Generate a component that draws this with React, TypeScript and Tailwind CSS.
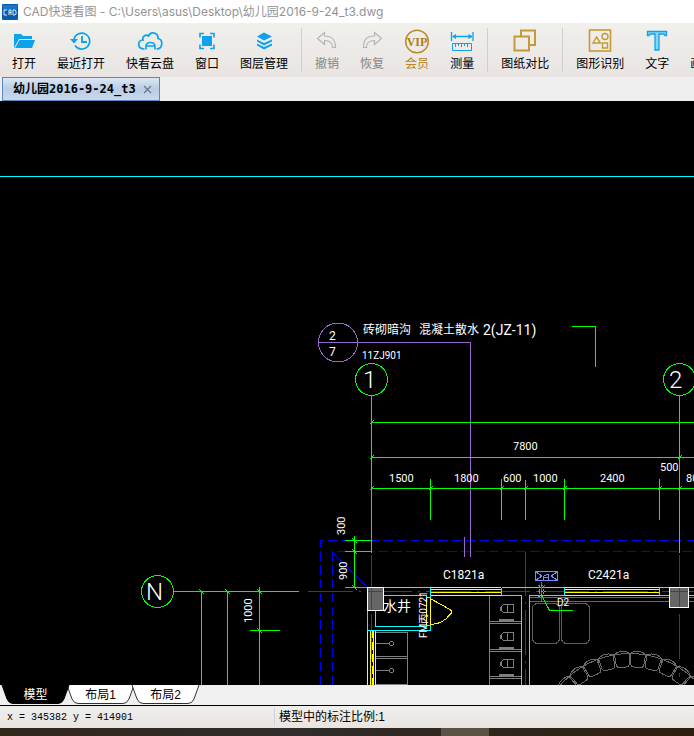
import type { ReactNode } from "react";

const SKY = "#0da2ea";
const GOLD = "#b98c2c";
const GREEN = "#00ff00";
const PURPLE = "#9966cc";
const CYAN = "#00ffff";
const YELLOW = "#ffff00";
const GREY = "#7f7f7f";
const DIM = "#404040";

function Icon({ children }: { children: ReactNode }) {
  return (
    <svg width="26" height="26" viewBox="0 0 26 26" fill="none" aria-hidden="true">
      {children}
    </svg>
  );
}

const icons: Record<string, ReactNode> = {
  open: (
    <Icon>
      <path d="M3 6h7l2 2h9v3H8l-5 9z" fill={SKY} />
      <path d="M8.500 12H24l-3 8H4z" fill={SKY} />
    </Icon>
  ),
  recent: (
    <Icon>
      <path d="M6 11a8 8 0 1 1 1 6.500" stroke={SKY} strokeWidth="1.600" />
      <path d="M2 11h8l-4 4.500z" fill={SKY} />
      <path d="M14 8v6h5" stroke={SKY} strokeWidth="1.800" />
    </Icon>
  ),
  cloud: (
    <Icon>
      <path
        d="M7.500 21C-.5 21 .5 11.500 6 12c-1-4 3-6 5.500-4 2-5 10-3.500 9.500 2.500C26.500 11.500 26 21 19.500 21"
        stroke={SKY}
        strokeWidth="1.700"
      />
      <path d="M9 21.500v-3q0-4 4.500-4t4.500 4v3M9 18h9" stroke={SKY} strokeWidth="1.600" />
    </Icon>
  ),
  windowed: (
    <Icon>
      <rect x="8" y="8" width="10" height="10" fill={SKY} />
      <path d="M6 9.500v-4h4M16 5.500h4v4M20 16.500v4h-4M10 20.500H6v-4" stroke={SKY} strokeWidth="1.600" />
    </Icon>
  ),
  layers: (
    <Icon>
      <path d="M13 4.500 21 8.500l-8 4-7-4z" fill={SKY} />
      <path d="m6 11.500 7 3.500 8-3.500v2l-8 4-7-4zM6 15.500l7 3.500 8-3.500v2L13 21.500l-7-4z" fill={SKY} />
    </Icon>
  ),
  undo: (
    <Icon>
      <path d="m3.500 10.500 7-6v3.500c8 0 11 4 11 11.500h-3c0-5-3-7-8-7v4z" stroke="#b4b4b4" strokeWidth="1.200" />
    </Icon>
  ),
  redo: (
    <Icon>
      <path d="m22.500 10.500-7-6v3.500c-8 0-11 4-11 11.500h3c0-5 3-7 8-7v4z" stroke="#b4b4b4" strokeWidth="1.200" />
    </Icon>
  ),
  vip: (
    <Icon>
      <circle cx="13" cy="13.500" r="11.300" stroke={GOLD} strokeWidth="1.500" />
      <text x="13" y="18" textAnchor="middle" className="fill-[#b07d12] font-['Liberation_Serif',serif] text-[12px] font-bold">
        VIP
      </text>
    </Icon>
  ),
  measure: (
    <Icon>
      <path d="M2.500 4v9M24 4v9M4 8.500h19" stroke={SKY} strokeWidth="1.300" />
      <path d="m3 8.500 4-2.500v5zM23.500 8.500 19.500 6v5z" fill={SKY} />
      <path d="M3.500 15.500h19v7h-19zM6.500 16v3M9.500 16v2M12.500 16v3M15.500 16v2M18.500 16v3" stroke={SKY} />
    </Icon>
  ),
  compare: (
    <Icon>
      <path d="M9 8V2.500h14V17h-6M2.500 8.500H17v14H2.500z" stroke="#c39a37" strokeWidth="2" />
    </Icon>
  ),
  shapes: (
    <Icon>
      <rect x="2.500" y="2" width="21" height="21" stroke="#c39a37" strokeWidth="1.600" />
      <path d="m9.500 9 4 6h-7.500zM15.500 15h5v5h-5z" stroke="#c39a37" strokeWidth="1.400" />
      <circle cx="18" cy="8.500" r="3" stroke="#c39a37" strokeWidth="1.400" />
    </Icon>
  ),
  text: (
    <Icon>
      <path d="M3.500 3.500h19v4h-1.500c0-1-1-1.500-2-1.500H15v16h-4V6H7c-1 0-2 .5-2 1.500H3.500z" stroke={SKY} strokeWidth="1.300" fill="#8ad4f7" />
    </Icon>
  ),
};

type Tool = { icon: string; label: string; tone?: string };

const toolGroups: Tool[][] = [
  [
    { icon: "open", label: "打开" },
    { icon: "recent", label: "最近打开" },
    { icon: "cloud", label: "快看云盘" },
    { icon: "windowed", label: "窗口" },
    { icon: "layers", label: "图层管理" },
  ],
  [
    { icon: "undo", label: "撤销", tone: "text-[#868686]" },
    { icon: "redo", label: "恢复", tone: "text-[#868686]" },
    { icon: "vip", label: "会员", tone: "text-[#b98522]" },
    { icon: "measure", label: "测量" },
  ],
  [{ icon: "compare", label: "图纸对比" }],
  [
    { icon: "shapes", label: "图形识别" },
    { icon: "text", label: "文字" },
    { icon: "draw", label: "画线" },
  ],
];

function Toolbar() {
  return (
    <nav className="flex h-[54px] shrink-0 overflow-hidden bg-linear-to-b from-[#f0f0ed] to-[#e9e4e1] pl-3">
      {toolGroups.map((group, i) => (
        <div key={i} className="flex shrink-0">
          {i > 0 && <div className="mx-[13px] my-[5px] w-px bg-[#cfcfcf]" />}
          <div className="flex gap-[21px]">
            {group.map((tool) => (
              <button
                key={tool.label}
                type="button"
                className={`flex shrink-0 flex-col items-center pt-[5px] text-[12px] leading-5 ${tool.tone ?? "text-black"}`}
              >
                <span className="-mx-1 block h-[26px]">{icons[tool.icon]}</span>
                <span>{tool.label}</span>
              </button>
            ))}
          </div>
        </div>
      ))}
    </nav>
  );
}

function Lines({ d, color, dash }: { d: string; color: string; dash?: string }) {
  return <path d={d} stroke={color} strokeDasharray={dash} fill="none" />;
}

const sizes = {
  xs: "text-[10px]",
  s: "text-[11px]",
  m: "text-[12px]",
  l: "text-[14px]",
  xl: "text-[24px] font-light",
};

type LabelProps = { x: number; y: number; size?: keyof typeof sizes; up?: boolean; children: ReactNode };

function Label({ x, y, size = "s", up, children }: LabelProps) {
  return (
    <text
      x={x}
      y={y}
      transform={up ? `rotate(-90 ${x} ${y})` : undefined}
      className={`fill-white font-['Roboto','Noto_Sans_CJK_SC',sans-serif] ${sizes[size]}`}
    >
      {children}
    </text>
  );
}

function Toilet({ y }: { y: number }) {
  return (
    <g stroke={GREY} fill="none">
      <path d={`M513.500 ${y - 4.5}H505c-5 0-5 8 0 8h8.500zM507.500 ${y - 4}v8M500.500 ${y - 2}v4`} />
      <path d={`M499 ${y + 11}h15`} strokeWidth="2" />
      <path d={`M489 ${y + 12.5}h32M489 ${y + 14.5}h32`} />
    </g>
  );
}

const ticks = [
  [371, 422], [371, 457], [371, 488], [430, 488], [501, 488], [525, 488], [564, 488], [659, 488],
  [679, 457], [679, 488],
];
const backTicks = [
  [354, 540], [354, 551], [354, 587], [201, 591], [227, 591], [259, 591], [259, 630],
];
const chairAngles = [-46, -35.8, -25.6, -15.3, -5.1, 5.1, 15.3, 25.6, 35.8, 46];

function Drawing() {
  return (
    <svg className="block h-full w-full" role="img" aria-label="幼儿园平面图" fill="none">
      <g transform="translate(0 -101)" shapeRendering="crispEdges">
        <path d="M0 176.500H4000" stroke={CYAN} />

        <Lines color={DIM} d="M308 591.500H694M371.500 555V685M525.500 551V685M679.500 555V677" dash="45 6 2 6" />
        <Lines color="#0000ff" d="M320.500 685V540.500H694M332.500 685V551.500H694" dash="9.500 4.300" />
        <Lines color="#0000ff" d="M332 552 367 587" />

        <circle cx="338" cy="342.500" r="19.500" stroke={PURPLE} />
        <Lines color={PURPLE} d="M318 342.500H470.500V557M464.500 537V557" />

        <circle cx="371.500" cy="379.500" r="16" stroke={GREEN} />
        <circle cx="679.500" cy="379.500" r="16" stroke={GREEN} />
        <circle cx="157.500" cy="591.500" r="16" stroke={GREEN} />
        <Lines
          color={GREEN}
          d="M371.500 396V553M679.500 396V553M371 422.500H694M371 457.500H694M371 488.500H694M430.500 479V520M501.500 479V520M525.500 480V520M564.500 479V520M659.500 479V520M572 326.500H595.500V367M345 540.500H371M345 551.500H371M345 587.500H367M354.500 536V588M173 591.500H299M201.500 591V685M227.500 591V685M259.500 587V685M250 630.500H280"
        />
        {ticks.map(([x, y]) => (
          <Lines key={`${x}-${y}`} color={GREEN} d={`M${x - 1} ${y + 2}l4 -4`} />
        ))}
        {backTicks.map(([x, y]) => (
          <Lines key={`${x}-${y}`} color={GREEN} d={`M${x - 2} ${y - 2}l5 5`} />
        ))}

        <Lines color={GREY} d="M407.500 632V685M376 632.500H407M376 656.500H407M376 658.500H407M376 684.500H407M376 643.500H390M376 670.500H390" />
        <circle cx="391.500" cy="643.500" r="2" stroke={GREY} />
        <circle cx="391.500" cy="670.500" r="2" stroke={GREY} />
        <Lines color={GREY} d="M489.500 596V685" />
        <Toilet y={609} />
        <Toilet y={637} />
        <Toilet y={664} />

        <rect x="532.500" y="603.500" width="27" height="40" rx="5" stroke="#5c5c5c" />
        <rect x="561.500" y="603.500" width="28" height="40" rx="5" stroke="#5c5c5c" />
        <circle cx="630" cy="746" r="92.500" stroke="#6a6a6a" />
        {chairAngles.map((a) => (
          <g key={a} transform={`rotate(${a} 630 746)`} stroke="#6a6a6a">
            <path d="M622.500 653.500 623.500 665q1 2 3 2h7q2 0 3-2L637.500 653.500" />
            <path d="M621.500 657v-3q8.500-6 17 0v3" />
          </g>
        ))}

        <Lines color={YELLOW} d="M430 587.500H501M430 589.500H501M430 592.500H501M430 595.500H501M564 587.500H659M564 589.500H659M564 592.500H659M564 595.500H659M367.500 630V685M370.500 630V685M373.500 630V685M375.500 630V685" />
        <Lines color={YELLOW} d="M372.500 630V685" dash="8 4" />
        <Lines color={YELLOW} d="M426.500 598V625M430.500 598V625M431 599 450 609.500Q453 612 450 614.500Q443 624 431 624.500" />
        <Lines
          color={CYAN}
          d="M383 587.500H430.500V597.500H426.500V595.500H375.500V626.500H426.500V625.500H430.500V630.500H367.500V610M501.500 587.500H564.500V595.500H529.500V685M501.500 587.500V595.500H521.500V685M694 587.500H659.500V595.500H694"
        />
        <Lines color="#ff00ff" d="M530 597.500H694M530 601.500H694M541.500 582V601" />
        <rect x="367.500" y="587.500" width="16" height="23" fill="#666666" stroke="#ffffff" />
        <rect x="669.500" y="587.500" width="19" height="20" fill="#666666" stroke="#ffffff" />
        <Lines color="#444444" d="M371.500 588V610M368 591.500H383M679.500 588V607M670 591.500H688" />

        <Lines color="#6f8fff" d="M535.500 571.500H557.500V580.500H535.500ZM536 572 542 576 536 580M557 572 551 576 557 580M543.500 579.500V576.500L546.500 574.500H548.500V579.500M544 577.500H548" />
        <Lines color="#6f8fff" d="M538 585.500H545M538 596.500H544M539.500 586V596M543.500 586V596M538 591.500H546" dash="2 1" />
        <Lines color={GREEN} d="M541 594 549.500 610.500H573" />
      </g>

      <g transform="translate(0 -101)">
        <Label x={363} y={334} size="m">砖砌暗沟</Label>
        <Label x={419} y={334} size="m">混凝土散水</Label>
        <Label x={483} y={335} size="l">2(JZ-11)</Label>
        <Label x={329} y={340} size="m">2</Label>
        <Label x={329} y={356} size="m">7</Label>
        <Label x={362} y={359} size="xs">11ZJ901</Label>
        <Label x={363} y={388} size="xl">1</Label>
        <Label x={669} y={388} size="xl">2</Label>
        <Label x={146} y={600} size="xl">N</Label>
        <Label x={513} y={450}>7800</Label>
        <Label x={389} y={482}>1500</Label>
        <Label x={454} y={482}>1800</Label>
        <Label x={503} y={482}>600</Label>
        <Label x={533} y={482}>1000</Label>
        <Label x={600} y={482}>2400</Label>
        <Label x={660} y={471}>500</Label>
        <Label x={686} y={482}>800</Label>
        <Label x={345} y={535} up>300</Label>
        <Label x={347} y={580} up>900</Label>
        <Label x={252} y={623} up>1000</Label>
        <Label x={443} y={579} size="m">C1821a</Label>
        <Label x={588} y={579} size="m">C2421a</Label>
        <Label x={383} y={611} size="l">水井</Label>
        <Label x={427} y={638} size="xs" up>FM丙0721</Label>
        <Label x={557} y={606} size="xs">D2</Label>
      </g>
    </svg>
  );
}

function SheetTab({ label, active }: { label: string; active?: boolean }) {
  return (
    <button
      type="button"
      className={`relative -mr-1 h-5 w-[69px] text-[12px] leading-[19px] ${active ? "z-10 text-white" : "text-black"}`}
    >
      <svg className="absolute inset-0 h-full w-full" viewBox="0 0 69 20" preserveAspectRatio="none" aria-hidden="true">
        <path
          d="M1 0 6 14Q8 18.500 12 18.500H57Q61 18.500 63 14L68 0"
          fill={active ? "#000000" : "#ffffff"}
          stroke={active ? "#000000" : "#333333"}
        />
      </svg>
      <span className="relative">{label}</span>
    </button>
  );
}

export default function App() {
  return (
    <div className="flex h-screen flex-col overflow-hidden bg-[#f0f0f0] font-['Liberation_Sans','Noto_Sans_CJK_SC',sans-serif]">
      <header className="flex h-[23px] shrink-0 items-center gap-[5px] bg-white pl-[2px]">
        <svg width="16" height="16" viewBox="0 0 16 16" aria-hidden="true">
          <rect width="16" height="16" rx="1" fill="#075cad" />
          <rect x="1" y="1" width="14" height="5" fill="#1878c8" />
          <path d="M5 6H2v5h3M7 11V6h2v5M7 8.500h2M11 6v5h2l1-1V7l-1-1z" stroke="#d8ecff" fill="none" />
        </svg>
        <h1 className="font-['Inter','Noto_Sans_CJK_SC',sans-serif] text-[12px] leading-[22px] text-[#939393]">
          CAD快速看图 - C:\Users\asus\Desktop\幼儿园2016-9-24_t3.dwg
        </h1>
      </header>

      <Toolbar />

      <div className="flex h-6 shrink-0 bg-[#efefef] pl-[2px]">
        <div className="flex w-[158px] items-center justify-between border border-[#5b86c0] bg-linear-to-b from-[#dce7f4] via-[#b9cde6] to-[#c9d9ec] pr-[7px] pl-[10px]">
          <button type="button" className="font-['DejaVu_Sans_Mono','Noto_Sans_CJK_SC',monospace] text-[12px] leading-[22px] font-bold whitespace-nowrap text-black">
            幼儿园2016-9-24_t3
          </button>
          <button type="button" aria-label="关闭">
            <svg width="9" height="9" viewBox="0 0 9 9" aria-hidden="true">
              <path d="m1 1 7 7M8 1 1 8" stroke="#6d7785" strokeWidth="1.200" />
            </svg>
          </button>
        </div>
      </div>

      <main className="min-h-0 flex-1 overflow-hidden bg-black">
        <Drawing />
      </main>

      <div className="flex h-[21px] shrink-0 border-b border-black bg-[#f0f0f0] pl-px">
        <SheetTab label="模型" active />
        <SheetTab label="布局1" />
        <SheetTab label="布局2" />
      </div>

      <footer className="flex h-[22px] shrink-0 items-center bg-linear-to-b from-[#efefec] to-[#e9e4e0] pl-[7px] text-[12px] text-black">
        <span className="w-[267px] font-['Liberation_Mono',monospace] text-[10px]">x = 345382 y = 414901</span>
        <span className="border-l border-[#cdd3d8] pl-1 leading-[18px]">模型中的标注比例:1</span>
      </footer>

      <div className="flex h-2 shrink-0 bg-linear-to-r from-[#33261b] via-[#2f2d2b] via-40% to-[#2f1e0f]">
        <div className="ml-[441px] w-12 bg-[#5d5044]" />
      </div>
    </div>
  );
}
